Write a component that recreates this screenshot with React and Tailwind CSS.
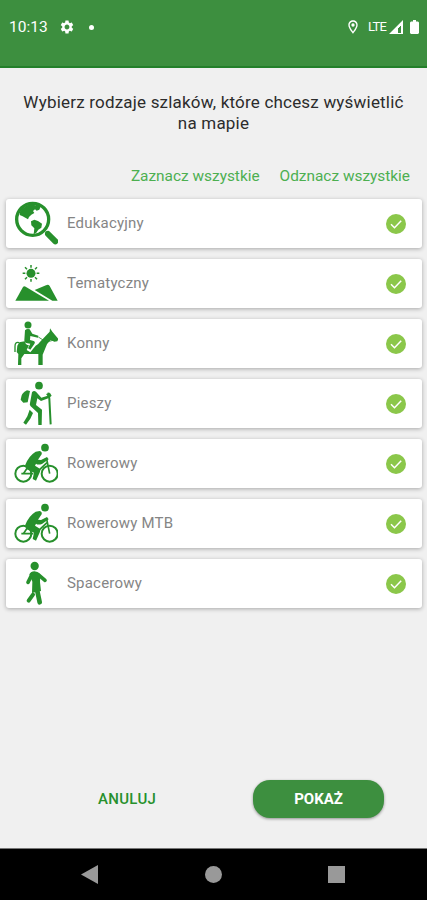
import { useState } from 'react'
import { MdOutlineLocationOn, MdSettings } from 'react-icons/md'

const EducationIcon = () => (
  <>
    <circle cx="56" cy="55" r="48" fill="none" stroke="currentColor" strokeWidth="10" />
    <path d="M95 92l7 7" fill="none" stroke="currentColor" strokeWidth="6" />
    <path d="M102 99l22 22" fill="none" stroke="currentColor" strokeWidth="18" strokeLinecap="round" />
    <path d="M18 32Q32 11 56 9l7 4 9-2 8 6-4 9-8 3-5-4-6 5 4 6-9 5-7 7-3 7-8-5-8-4-9-4z" />
    <path d="M51 61l10-5 11 4 12 8-2 12-9 6-6 9-8 5 2-18-9-9z" />
  </>
)

const ThemeIcon = () => (
  <>
    <circle cx="51" cy="37" r="13.5" />
    <path
      d="M51 12v8M51 54v8M26 37h8M68 37h8M33 19l6 6M63 49l6 6M33 55l6-6M63 25l6-6"
      fill="none"
      stroke="currentColor"
      strokeWidth="4.5"
    />
    <path d="M4 119L27 78q3-4 8-1l70 42z" />
    <path d="M62 87l34-14q7-4 11 2l24 44h-16z" />
  </>
)

const HorseIcon = () => (
  <>
    <circle cx="42" cy="12" r="10.5" />
    <path d="M33 28q6-6 14-3l8 13 18 6-1 6-23-5-1 12 11 3q6 3 2 9l-12 17-7-4 7-14-13-2q-6-2-5-9z" />
    <path
      d="M16 64l16-3q3 12 13 12l-7 14 11 7 16-20q7-2 12-10l30-32 1-10 7 10 18 22-3 7-9 1-11-5q-12 10-16 25l-8 19v31H73V99l-42 0-9 13v20H12l1-33-5-6 2-19z"
    />
    <path d="M15 65Q3 61 3 76v17" fill="none" stroke="currentColor" strokeWidth="4" />
    <path d="M73 48l19 12q16 3 31-4l-5-12" fill="none" stroke="currentColor" strokeWidth="2.5" />
  </>
)

const HikerIcon = () => (
  <>
    <circle cx="75" cy="14" r="11.5" />
    <path d="M39 28l9 2-7 34-13 1-8-9q2-21 19-28z" />
    <path d="M54 34q5-7 12-2l16 18 19-6 4 7-24 9-11-8-4 20 18 14-1 46H73l-1-36-22-20q-4-4-2-10z" />
    <path d="M47 86l10 10-8 17-13 18-8-6 12-19z" />
    <path d="M103 35l3 18 4 77" fill="none" stroke="currentColor" strokeWidth="6" />
    <path d="M96 39l12-3 5 8-8 7z" />
  </>
)

const BikeIcon = () => (
  <>
    <g fill="none" stroke="currentColor">
      <circle cx="28" cy="98" r="24" strokeWidth="6" />
      <circle cx="107" cy="98" r="24" strokeWidth="6" />
      <path d="M28 98l18-26M22 98h36M98 54l9 44M99 65L64 98" strokeWidth="5" />
    </g>
    <circle cx="93" cy="20" r="11.5" />
    <path d="M65 32l12-2q8 2 6 10L72 56l9 1 18-9 5 7-20 14q-12 4-18-1l-3 6 11 7q7 4 4 11l-12 27-10-5 4-19-17-8q-11-5-9-16 11-27 31-39z" />
  </>
)

const WalkIcon = () => (
  <>
    <circle cx="62" cy="15" r="12.5" />
    <g fill="none" stroke="currentColor" strokeLinecap="round" strokeLinejoin="round">
      <path d="M54 40L42 64M72 40l21 18" strokeWidth="11" />
      <path d="M67 76l10 48" strokeWidth="14" />
      <path d="M57 101l-13 18" strokeWidth="12" />
    </g>
    <path d="M46 40q5-9 15-9 10 0 18 10l-1 22 3 27-27 6 1-34z" />
  </>
)

const TRAILS = [
  { id: 'edu', label: 'Edukacyjny', Icon: EducationIcon },
  { id: 'theme', label: 'Tematyczny', Icon: ThemeIcon },
  { id: 'horse', label: 'Konny', Icon: HorseIcon },
  { id: 'hike', label: 'Pieszy', Icon: HikerIcon },
  { id: 'bike', label: 'Rowerowy', Icon: BikeIcon },
  { id: 'mtb', label: 'Rowerowy MTB', Icon: BikeIcon },
  { id: 'walk', label: 'Spacerowy', Icon: WalkIcon },
]

function StatusBar() {
  return (
    <header className="flex h-[68px] items-start justify-between border-b-2 border-[#23802a] bg-[#3d8f3f] pr-2 pl-[9px] text-white">
      <div className="flex h-[54px] items-center">
        <span className="w-[50px] pt-px text-[15.5px]">10:13</span>
        <MdSettings className="size-4" />
        <span className="ml-[14px] size-[5px] rounded-full bg-white" />
      </div>
      <div className="flex h-[54px] items-center">
        <MdOutlineLocationOn className="size-4" />
        <span className="ml-[7px] w-[21px] text-[13px] tracking-[-0.8px]">LTE</span>
        <svg viewBox="0 0 14 14" className="size-[14px]" fill="currentColor">
          <path d="M0 14L14 0v14h-2V5L9 8v6z" />
          <path d="M9 8l4-4v9.5H9" fill="none" stroke="currentColor" />
        </svg>
        <svg viewBox="0 0 9 14" className="ml-[7px] h-[14px] w-[9px]" fill="currentColor">
          <path d="M3 0h3v1.5h2l1 1V13l-1 1H1l-1-1V2.5l1-1h2z" />
        </svg>
      </div>
    </header>
  )
}

function TrailRow({ label, Icon, checked, onToggle }) {
  return (
    <button
      type="button"
      onClick={onToggle}
      aria-pressed={checked}
      className="flex h-[49px] items-center rounded-[3px] bg-white pr-4 pl-2 text-left shadow-[0_1px_4px_rgba(0,0,0,0.3)]"
    >
      <svg viewBox="0 0 132 132" className="mb-px size-11 shrink-0 text-[#27902c]" fill="currentColor">
        <Icon />
      </svg>
      <span className="ml-[9px] flex-1 text-[15px] tracking-[0.2px] text-[#858585]">{label}</span>
      {checked && (
        <svg viewBox="0 0 20 20" className="size-5">
          <circle cx="10" cy="10" r="10" fill="#8bc74a" />
          <path d="M5 10.2l3.500 3.500 6.700-7" fill="none" stroke="#fff" strokeWidth="1.5" />
        </svg>
      )}
    </button>
  )
}

export default function App() {
  const [selected, setSelected] = useState(TRAILS.map((t) => t.id))

  const toggle = (id) =>
    setSelected((prev) => (prev.includes(id) ? prev.filter((x) => x !== id) : [...prev, id]))

  return (
    <div className="flex h-[900px] w-[427px] flex-col bg-[#f0f0f0] font-['Roboto',sans-serif]">
      <StatusBar />

      <main className="flex flex-1 flex-col">
        <h1 className="mt-6 text-center text-[17px] leading-[21px] tracking-[0.2px] text-[#2c2c2c]">
          Wybierz rodzaje szlaków, które chcesz wyświetlić
          <br />
          na mapie
        </h1>

        <div className="mt-[31px] flex h-[22px] justify-end gap-5 pr-[17px] text-[15.4px] leading-[22px] text-[#4caf50]">
          <button type="button" onClick={() => setSelected(TRAILS.map((t) => t.id))}>
            Zaznacz wszystkie
          </button>
          <button type="button" onClick={() => setSelected([])}>
            Odznacz wszystkie
          </button>
        </div>

        <div className="mt-3 flex flex-col gap-[11px] pr-[5px] pl-[6px]">
          {TRAILS.map(({ id, label, Icon }) => (
            <TrailRow
              key={id}
              label={label}
              Icon={Icon}
              checked={selected.includes(id)}
              onToggle={() => toggle(id)}
            />
          ))}
        </div>

        <div className="mt-auto mb-[30px] flex h-[38px] items-center justify-between pr-[43px] pl-[98px]">
          <button type="button" className="pt-px text-[15px] font-medium tracking-[0.3px] text-[#27902c]">
            ANULUJ
          </button>
          <button
            type="button"
            className="h-[38px] w-[131px] rounded-[17px] bg-[#3d8f3f] pt-px text-[15px] font-bold text-white shadow-[0_1px_3px_rgba(0,0,0,0.4)]"
          >
            POKAŻ
          </button>
        </div>
      </main>

      <nav className="flex h-[52px] items-center justify-between border-t border-[#777] bg-black pr-[82px] pl-[81px]">
        <svg viewBox="0 0 17 19" className="h-[19px] w-[17px]" fill="#999">
          <path d="M0 9.5L17 0v19z" />
        </svg>
        <span className="size-[17px] rounded-full bg-[#999]" />
        <span className="size-[17px] bg-[#999]" />
      </nav>
    </div>
  )
}
